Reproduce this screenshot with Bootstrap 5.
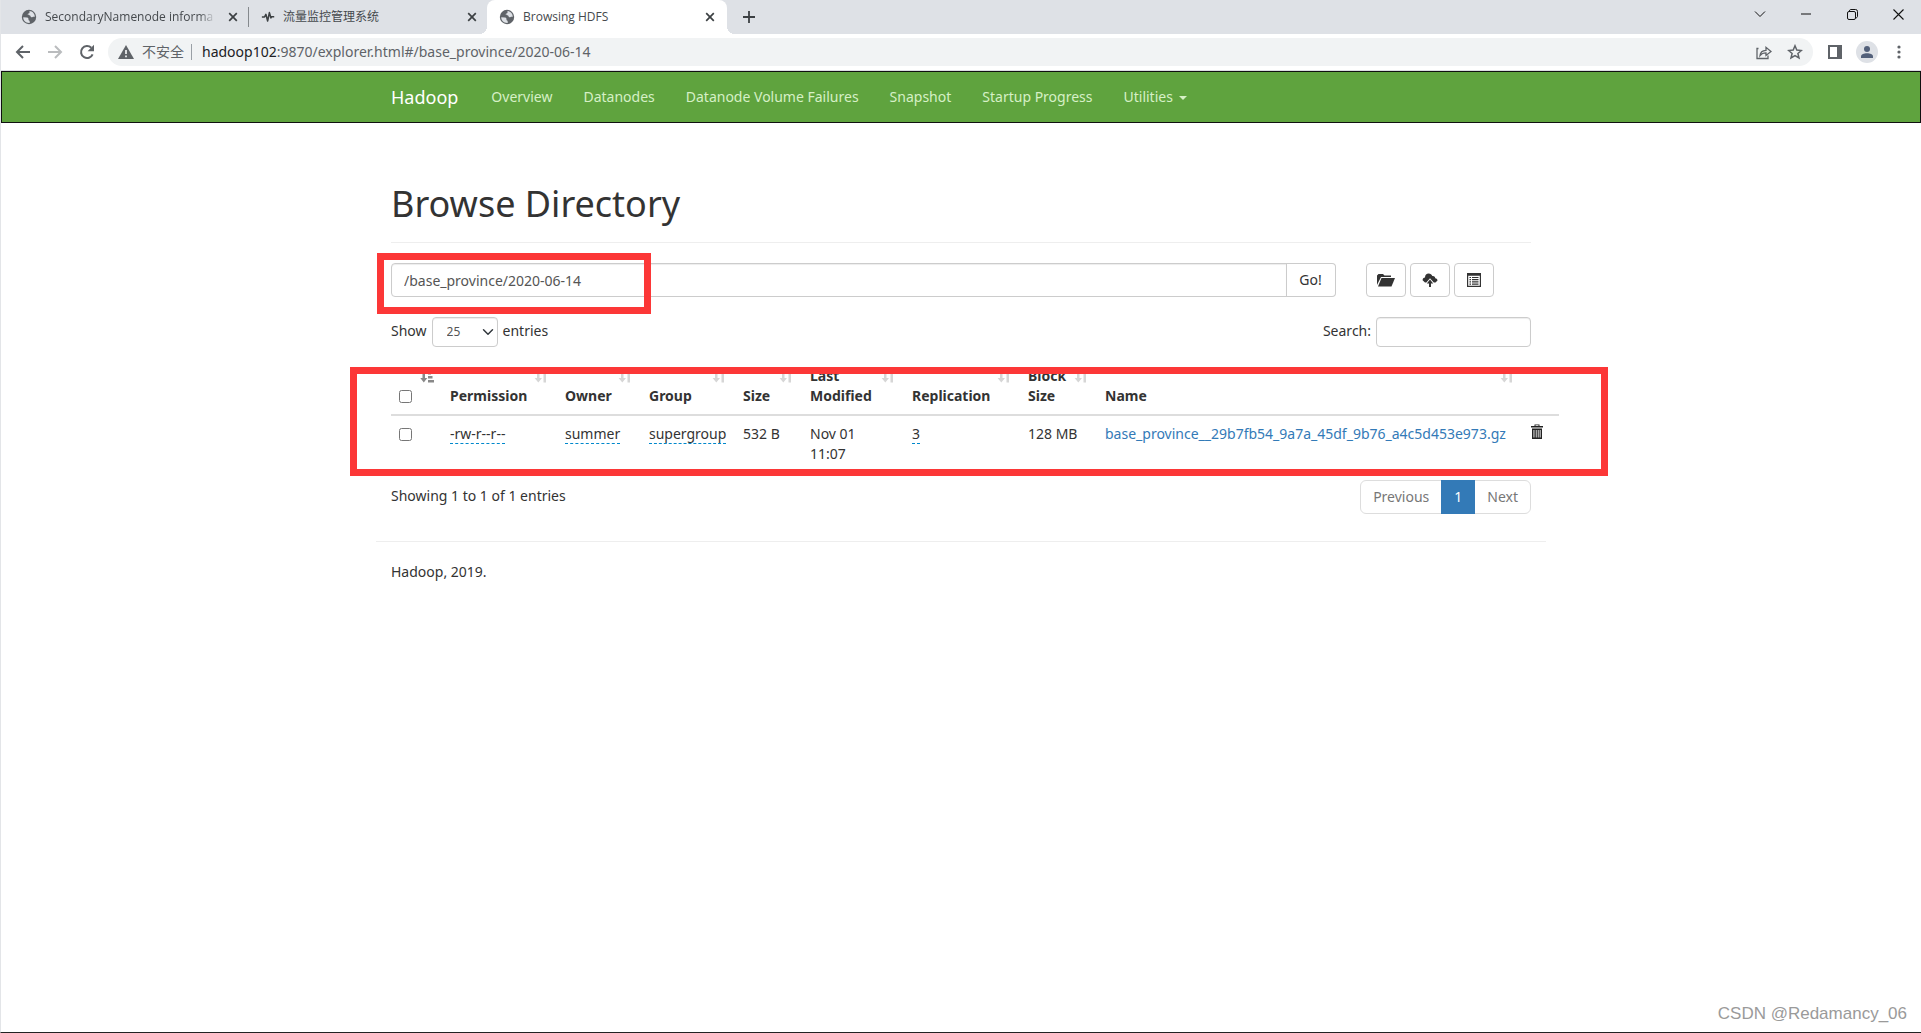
<!DOCTYPE html>
<html lang="en">
<head>
<meta charset="utf-8">
<meta name="viewport" content="width=device-width, initial-scale=1">
<title>Browsing HDFS</title>
<link href="https://cdn.jsdelivr.net/npm/bootstrap@5.3.0/dist/css/bootstrap.min.css" rel="stylesheet">
<style>
body{font-family:"Noto Sans","Noto Sans CJK SC",sans-serif;font-size:14px;line-height:20px;color:#333;background:#fff;border-left:1px solid #e3e5e8;border-bottom:1px solid #222;min-height:100vh}
button{font-family:inherit}
svg{display:block;flex:none}
/* browser chrome */
.tabstrip{background:#dee1e6;height:34px}
.btab{width:238px;height:26px;margin-top:4px;padding:0 6px 0 12px;font-family:"Open Sans","Noto Sans CJK SC",sans-serif;font-size:12px;line-height:16px;color:#45494d;gap:8px}
.btab .ttl{flex:1;min-width:0;white-space:nowrap}
.btab.first{width:248px;height:20px;margin-top:7px;padding:0 6px 0 20px;border-right:1px solid #85898d}
.btab.first .ttl{-webkit-mask-image:linear-gradient(90deg,#000 90%,transparent)}
.btab.current{width:240px;padding-right:8px;background:#fff;border-radius:8px 8px 0 0;height:34px;margin-top:0;padding-bottom:1px;position:relative}
.btab.current::before,.btab.current::after{content:"";position:absolute;bottom:0;width:8px;height:8px}
.btab.current::before{left:-8px;background:radial-gradient(circle at 0 0,transparent 8px,#fff 8px)}
.btab.current::after{right:-8px;background:radial-gradient(circle at 100% 0,transparent 8px,#fff 8px)}
.plain{background:none;border:0;padding:0;color:#3c4043;display:flex;align-items:center;justify-content:center}
.tabx{width:18px;height:18px}
.winctl{width:46px;height:28px;color:#111}
.toolbar{height:37px;background:#fff;border-bottom:1px solid #dcdee2;padding:0 11px 0 6px}
.tool{width:32px;height:28px;color:#5f6368}
.omni{background:#f1f3f4;border-radius:14px;height:28px;padding:0 8px 0 10px;margin-left:5px;margin-right:6px;color:#5f6368}
.omni .host{color:#202124}
.omni .sep{width:1px;height:16px;background:#9aa0a6;margin:0 10px 0 7px}
/* page */
.hnav{background:#5fa33e;border:1px solid #101010;padding:0;min-height:52px}
.hnav .navbar-nav{gap:1px}
.wrap{width:100%;max-width:1170px;margin:0 auto;padding:0 15px}
.hnav .navbar-brand{color:#fff;font-size:18px;line-height:20px;padding:15px 18px 15px 0;margin:0}
.hnav .nav-link{color:#d6f0c6;padding:15px!important;line-height:20px}
.hnav .dropdown-toggle::after{border-top-width:4px;border-left-width:4px;border-right-width:4px;margin-left:6px;vertical-align:2px}
h1{font-size:36px;line-height:40px;font-weight:400;margin:61px 0 0;padding-bottom:18px;border-bottom:1px solid #eee}
.pathrow{margin-top:20px;position:relative}
.form-control,.form-select{font-size:14px;color:#555;border-color:#ccc;border-radius:4px;box-shadow:inset 0 1px 1px rgba(0,0,0,.075)}
.pathrow .form-control{height:34px;padding:6px 12px}
.pathrow .input-group{width:945px;flex:0 1 auto}
.gbtn{border:1px solid #ccc;background:#fff;color:#333;font-size:14px;line-height:20px;padding:6px 12px;border-radius:4px;height:34px;min-width:50px}
.iconbtn{width:40px;min-width:0;padding:0;display:flex;align-items:center;justify-content:center}
.hint{position:absolute;border:7px solid #fc3737;pointer-events:none}
.hint-path{left:-14px;top:-10px;width:274px;height:61px}
.hint-table{left:-41px;right:-77px;top:9px;bottom:-4px}
.lenbar{margin-top:20px}
.lenbar>div{gap:5px}
.lenbar .form-select{width:66px;height:30px;font-size:12px;padding:5px 20px 5px 14px;background-size:12px;background-position:right 3px center}
.lenbar .form-control{width:155px;height:30px}
.tblbox{margin-top:11px;position:relative}
.hdfs{table-layout:fixed;width:1168px;color:#333;margin:0}
.hdfs th,.hdfs td{padding:8px;vertical-align:top;border:0;line-height:20px;color:#333}
.hdfs th{vertical-align:bottom;position:relative;border-bottom:2px solid #ddd}
.hdfs th svg{position:absolute;right:9px;bottom:31px;color:#d6d6d6}
.hdfs th svg.on{color:#888;right:8px}
.hdfs input{display:block;width:13px;height:13px;margin:4px 0 3px}
.hdfs .ed{color:#333;text-decoration:none;border-bottom:1px dashed #08c}
.hdfs a.file{color:#337ab7;text-decoration:none}
.pager{margin-top:8px}
.pager .page-link{font-size:14px;line-height:20px;padding:6px 12px;color:#777;border-color:#ddd}
.pager .active .page-link{color:#fff;background:#337ab7;border-color:#337ab7}
.foot{border-top:1px solid #eee;margin:27px -15px 0;padding:20px 15px}
.wm{position:absolute;right:14px;bottom:7px;font:17px/22px "Liberation Sans",sans-serif;color:#9a9a9a}
</style>
</head>
<body class="position-relative">
<svg width="0" height="0" class="position-absolute">
<symbol id="globe" viewBox="0 0 16 16"><circle cx="8" cy="8" r="7.2" fill="#5f6368"/><path d="M2.2 8.3 6 8.6c1.500 0 1.500 1.400 1.500 2.200s1.200.7 1.200 1.600V14C4.800 14.300 2.300 11.600 2.200 8.300zM8.500 2v1.800c0 1-1.800.6-1.800 1.600 0 .8 1.600.4 2.400 1.200.7.700.3 1.700 1.400 1.700s1.200-.6 2.200-.6h1.100C13.800 4.700 11.500 2.200 8.500 2z" fill="#dee1e6"/></symbol>
<symbol id="cross" viewBox="0 0 10 10"><path d="M1.200 1.200l7.600 7.600M8.800 1.200 1.200 8.800" stroke="currentColor" stroke-width="1.700" fill="none"/></symbol>
<symbol id="sort" viewBox="0 0 14 14"><path d="M3 0h2.500v9H8l-3.700 4.500L.6 9H3zM9.500 0H12v13.500H9.500z" fill="currentColor"/></symbol>
</svg>

<header>
<div class="tabstrip d-flex align-items-start">
  <div class="btab first d-flex align-items-center"><svg width="16" height="16"><use href="#globe"/></svg><span class="ttl">SecondaryNamenode informa</span><button class="plain tabx" aria-label="Close tab"><svg width="10" height="10"><use href="#cross"/></svg></button></div>
  <div class="btab d-flex align-items-center"><svg width="14" height="14" viewBox="0 0 16 16"><path d="M1 8h3l1.600-3 2 7.500 2-9.500 1.700 6 .8-1.300h3" stroke="#3c4043" stroke-width="1.800" fill="none" stroke-linejoin="round"/></svg><span class="ttl">流量监控管理系统</span><button class="plain tabx" aria-label="Close tab"><svg width="10" height="10"><use href="#cross"/></svg></button></div>
  <div class="btab current d-flex align-items-center"><svg width="16" height="16"><use href="#globe"/></svg><span class="ttl">Browsing HDFS</span><button class="plain tabx" aria-label="Close tab"><svg width="10" height="10"><use href="#cross"/></svg></button></div>
  <button class="plain mt-1 ms-2" style="width:28px;height:26px" aria-label="New tab"><svg width="12" height="12" viewBox="0 0 12 12"><path d="M6 0v12M0 6h12" stroke="currentColor" stroke-width="1.800"/></svg></button>
  <div class="d-flex ms-auto">
    <button class="plain winctl" aria-label="Search tabs"><svg width="12" height="8" viewBox="0 0 12 8"><path d="M1 1.500l5 5 5-5" stroke="currentColor" fill="none"/></svg></button>
    <button class="plain winctl" aria-label="Minimize"><svg width="10" height="2"><path d="M0 1h10" stroke="currentColor"/></svg></button>
    <button class="plain winctl" aria-label="Restore"><svg width="11" height="11" viewBox="0 0 11 11"><path d="M2.500 2.500V2A1.500 1.500 0 0 1 3.500.5h5a2 2 0 0 1 2 2v5c0 .7-.5 1-1.500 1.500" fill="none" stroke="currentColor"/><rect x=".5" y="2.500" width="8" height="8" rx="1.500" fill="none" stroke="currentColor"/></svg></button>
    <button class="plain winctl" aria-label="Close"><svg width="11" height="11" viewBox="0 0 11 11"><path d="M.5.5l10 10M10.500.5l-10 10" stroke="currentColor" stroke-width="1.100"/></svg></button>
  </div>
</div>
<div class="toolbar d-flex align-items-center">
  <button class="plain tool" aria-label="Back"><svg width="16" height="16" viewBox="0 0 16 16"><path d="M15 8H2.500M8 2 2 8l6 6" stroke="currentColor" stroke-width="2" fill="none"/></svg></button>
  <button class="plain tool" style="color:#babcbe" aria-label="Forward"><svg width="16" height="16" viewBox="0 0 16 16"><path d="M1 8h12.500M8 2l6 6-6 6" stroke="currentColor" stroke-width="2" fill="none"/></svg></button>
  <button class="plain tool" aria-label="Reload"><svg width="16" height="16" viewBox="0 0 16 16"><path d="M13.600 10.300A6 6 0 1 1 12.300 3.800" stroke="currentColor" stroke-width="2" fill="none"/><path d="M15 .8v6.400H8.600z" fill="currentColor"/></svg></button>
  <div class="omni d-flex align-items-center flex-fill">
    <svg width="16" height="14" viewBox="0 0 16 14"><path d="M8 0l8 14H0z" fill="currentColor"/><path d="M8 5v4M8 10.500v1.700" stroke="#f1f3f4" stroke-width="1.700"/></svg>
    <span class="ps-2">不安全</span><span class="sep"></span>
    <div class="flex-fill" role="textbox" contenteditable="true" spellcheck="false" aria-label="Address"><span class="host">hadoop102</span>:9870/explorer.html#/base_province/2020-06-14</div>
    <button class="plain tool" aria-label="Share"><svg width="16" height="15" viewBox="0 0 16 15"><path d="M2.500 3.500h-1.500v10h11v-3M4 10.500c.3-3.500 2.500-5 6-5.200v-3L15 6.500l-5 4v-2.700c-2.500 0-4.500.7-6 2.700z" stroke="currentColor" stroke-width="1.300" fill="none"/></svg></button>
    <button class="plain tool" style="width:20px;margin-left:5px" aria-label="Bookmark"><svg width="16" height="16" viewBox="0 0 16 16"><path d="M8 1.800l1.800 4.300 4.600.4-3.500 3 1.100 4.500L8 11.600 4 14l1.100-4.500-3.500-3 4.600-.4z" stroke="currentColor" stroke-width="1.500" fill="none"/></svg></button>
  </div>
  <button class="plain tool" aria-label="Side panel"><svg width="14" height="14" viewBox="0 0 14 14"><path d="M0 0h14v14H0zM2 2v10h7V2z" fill="currentColor" fill-rule="evenodd"/></svg></button>
  <button class="plain tool" aria-label="Profile"><svg width="22" height="22" viewBox="0 0 22 22"><circle cx="11" cy="11" r="11" fill="#dee1e6"/><circle cx="11" cy="8" r="3" fill="#53607a"/><path d="M5 17v-1.500c0-2 3-3.200 6-3.200s6 1.200 6 3.200V17z" fill="#53607a"/></svg></button>
  <button class="plain tool" style="width:22px;margin-left:5px" aria-label="Menu"><svg width="4" height="14"><circle cx="2" cy="2" r="1.600" fill="currentColor"/><circle cx="2" cy="7" r="1.600" fill="currentColor"/><circle cx="2" cy="12" r="1.600" fill="currentColor"/></svg></button>
</div>
</header>

<nav class="navbar navbar-expand hnav">
  <div class="wrap d-flex align-items-center">
    <a class="navbar-brand" href="#">Hadoop</a>
    <ul class="navbar-nav">
      <li class="nav-item"><a class="nav-link" href="#">Overview</a></li>
      <li class="nav-item"><a class="nav-link" href="#">Datanodes</a></li>
      <li class="nav-item"><a class="nav-link" href="#">Datanode Volume Failures</a></li>
      <li class="nav-item"><a class="nav-link" href="#">Snapshot</a></li>
      <li class="nav-item"><a class="nav-link" href="#">Startup Progress</a></li>
      <li class="nav-item dropdown"><a class="nav-link dropdown-toggle" href="#" data-bs-toggle="dropdown">Utilities</a></li>
    </ul>
  </div>
</nav>

<main class="wrap">
  <h1>Browse Directory</h1>
  <div class="pathrow d-flex">
    <div class="input-group">
      <input class="form-control" type="text" value="/base_province/2020-06-14" aria-label="Directory">
      <button class="gbtn rounded-start-0 border-start-0">Go!</button>
    </div>
    <div class="d-flex gap-1" style="margin-left:30px">
      <button class="gbtn iconbtn" aria-label="Create directory"><svg width="18" height="14" viewBox="0 0 18 14"><path d="M0 12V2.500L1.500 1H6l1.500 1.500H14V4H4z" fill="#333"/><path d="M4.500 5H18l-3.500 8.500H1z" fill="#333"/></svg></button>
      <button class="gbtn iconbtn" aria-label="Upload files"><svg width="16" height="14" viewBox="0 0 16 14"><path d="M3 9.500 .6 7.300C.6 5.500 1.600 4.600 3 4.500 3 2 4.500.5 6.700.5c1.800 0 3 1 3.600 2.500 2-.3 3 1 2.900 2.300 1.500.2 2.300 1 2.300 2.200L13.500 9.500h-1.700L8 5.300 4.300 9.500z" fill="#333"/><path d="M8 6.500l3.200 4H9V14H7v-3.500H4.800z" fill="#333"/></svg></button>
      <button class="gbtn iconbtn" aria-label="Cut and paste"><svg width="14" height="14" viewBox="0 0 14 14"><path d="M0 0h14v14H0zM1.200 2.800v10h11.600v-10z" fill="#333" fill-rule="evenodd"/><path d="M2.500 4.500h1.500M2.500 6.700h1.500M2.500 8.900h1.500M2.500 11.100h1.500M5 4.500h6.500M5 6.700h6.500M5 8.900h6.500M5 11.100h6.500" stroke="#333" stroke-width="1.200"/></svg></button>
    </div>
    <div class="hint hint-path"></div>
  </div>

  <div class="lenbar d-flex justify-content-between">
    <div class="d-flex"><label for="len" class="pt-1">Show</label><select id="len" class="form-select"><option>25</option></select><span class="pt-1">entries</span></div>
    <div class="d-flex"><label for="q" class="pt-1">Search:</label><input id="q" type="search" class="form-control"></div>
  </div>

  <div class="tblbox">
    <table class="table hdfs">
      <colgroup><col style="width:51px"><col style="width:115px"><col style="width:84px"><col style="width:94px"><col style="width:67px"><col style="width:102px"><col style="width:116px"><col style="width:77px"><col style="width:426px"><col style="width:36px"></colgroup>
      <thead><tr>
        <th><input type="checkbox" aria-label="Select all"><svg class="on" width="14" height="14" viewBox="0 0 14 14"><path d="M2.500 0H5v9h2.300l-3.500 4.500L.3 9h2.200zM8 3h3v2.500H8zM8 7h4.500v2.500H8zM8 11h6v2.500H8z" fill="currentColor"/></svg></th>
        <th>Permission<svg width="14" height="14"><use href="#sort"/></svg></th>
        <th>Owner<svg width="14" height="14"><use href="#sort"/></svg></th>
        <th>Group<svg width="14" height="14"><use href="#sort"/></svg></th>
        <th>Size<svg width="14" height="14"><use href="#sort"/></svg></th>
        <th>Last<br>Modified<svg width="14" height="14"><use href="#sort"/></svg></th>
        <th>Replication<svg width="14" height="14"><use href="#sort"/></svg></th>
        <th>Block<br>Size<svg width="14" height="14"><use href="#sort"/></svg></th>
        <th>Name<svg width="14" height="14"><use href="#sort"/></svg></th>
        <th></th>
      </tr></thead>
      <tbody><tr>
        <td><input type="checkbox" aria-label="Select file"></td>
        <td><a href="#" class="ed">-rw-r--r--</a></td>
        <td><a href="#" class="ed">summer</a></td>
        <td><a href="#" class="ed">supergroup</a></td>
        <td>532 B</td>
        <td>Nov 01<br>11:07</td>
        <td><a href="#" class="ed">3</a></td>
        <td class="text-nowrap">128 MB</td>
        <td class="text-nowrap"><a href="#" class="file">base_province__29b7fb54_9a7a_45df_9b76_a4c5d453e973.gz</a></td>
        <td><button class="plain" aria-label="Delete"><svg width="12" height="15" viewBox="0 0 12 15"><path d="M0 2h3.500V.5h5V2H12v1.500H0zM4.500 1.200V2h3v-.8zM1 4.500h10V15H1zM2.500 6v7.500h.9V6zM4.800 6v7.500h.8V6zM6.800 6v7.500h.8V6zM8.700 6v7.500h.9V6z" fill="#222" fill-rule="evenodd"/></svg></button></td>
      </tr></tbody>
    </table>
    <div class="hint hint-table"></div>
  </div>

  <div class="pager d-flex justify-content-between">
    <div style="padding-top:6px">Showing 1 to 1 of 1 entries</div>
    <ul class="pagination m-0">
      <li class="page-item"><a class="page-link" href="#">Previous</a></li>
      <li class="page-item active"><a class="page-link" href="#">1</a></li>
      <li class="page-item"><a class="page-link" href="#">Next</a></li>
    </ul>
  </div>
  <footer class="foot">Hadoop, 2019.</footer>
</main>
<div class="wm">CSDN @Redamancy_06</div>
<script src="https://cdn.jsdelivr.net/npm/bootstrap@5.3.0/dist/js/bootstrap.bundle.min.js"></script>
</body>
</html>
